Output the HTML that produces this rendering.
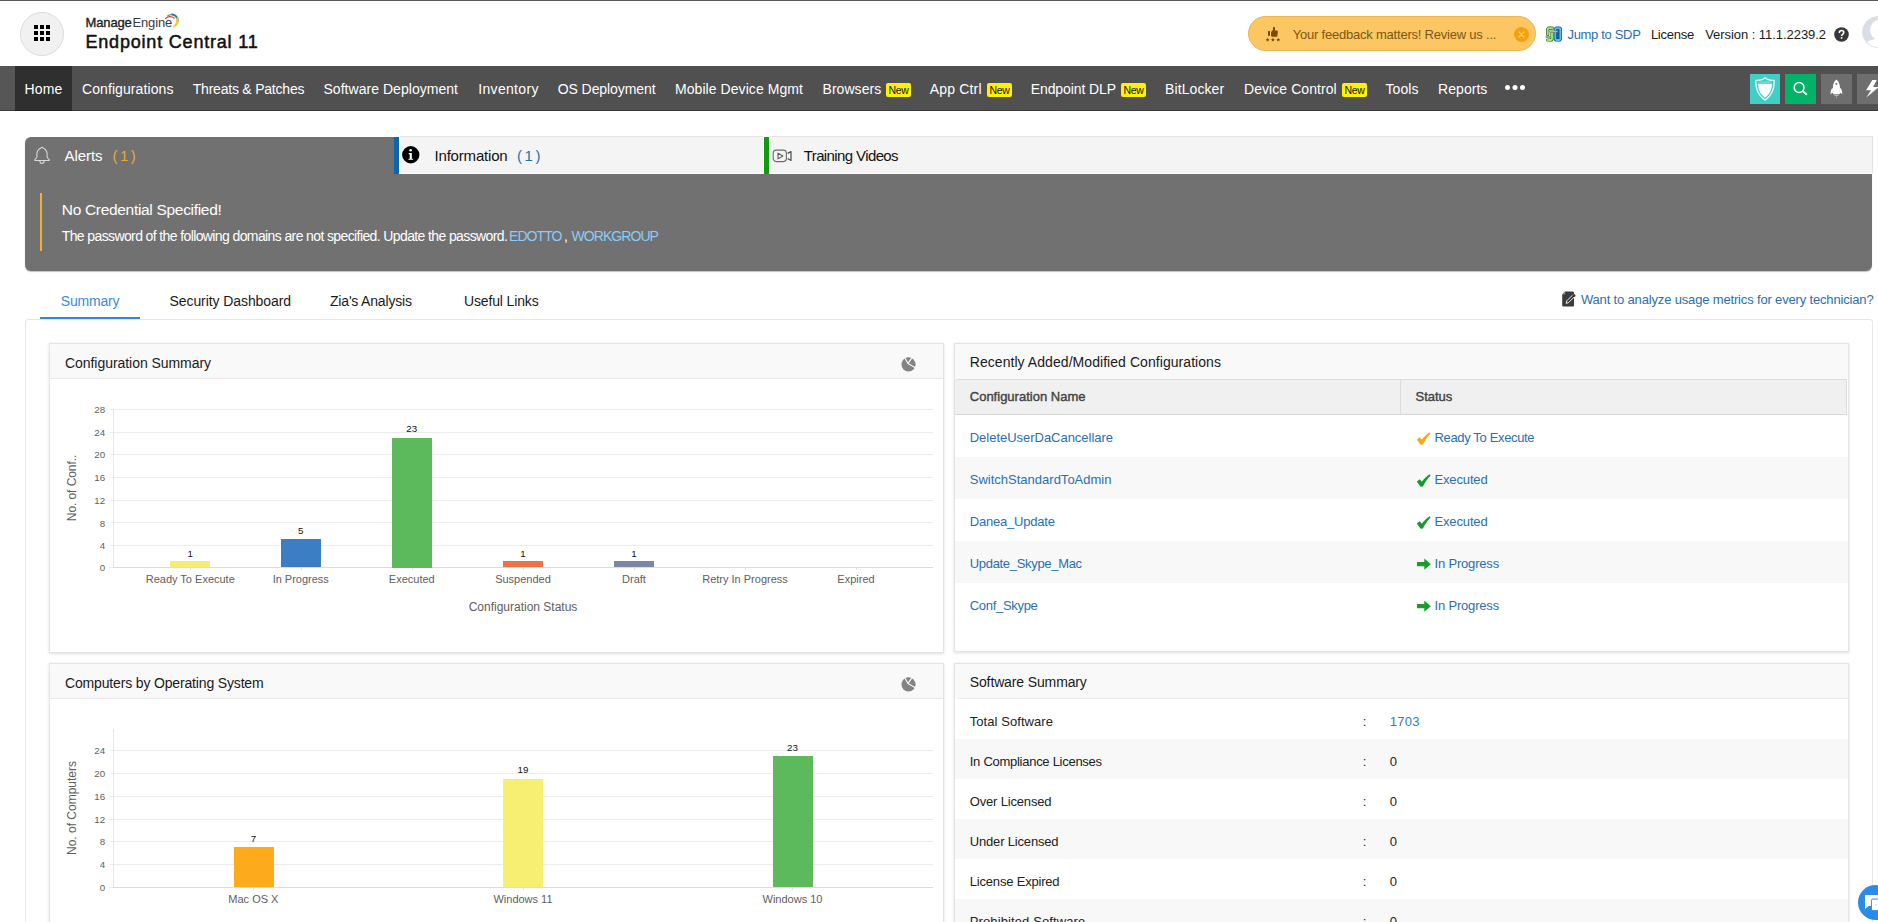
<!DOCTYPE html>
<html lang="en">
<head>
<meta charset="utf-8">
<title>Endpoint Central 11</title>
<style>
html,body{margin:0;padding:0;}
body{width:1878px;height:922px;overflow:hidden;background:#fff;position:relative;font-family:"Liberation Sans",sans-serif;}
.a{position:absolute;box-sizing:border-box;}
.t{position:absolute;white-space:nowrap;line-height:1;font-family:"Liberation Sans",sans-serif;}
svg{position:absolute;overflow:visible;}
.badge{position:absolute;top:83px;width:24.5px;height:14px;background:#fff200;border-radius:2px;}
.card{position:absolute;box-sizing:border-box;background:#fff;border:1px solid #e4e4e4;box-shadow:0 1px 3px rgba(0,0,0,0.13);}
.chd{position:absolute;left:0;top:0;right:0;height:35px;background:#f9f9f9;border-bottom:1px solid #e8e8e8;box-sizing:border-box;}
.gl{position:absolute;height:1px;background:#ececec;left:110px;width:823px;}
.bar{position:absolute;}
.row{position:absolute;left:955px;width:893px;}
</style>
</head>
<body>
<!-- top hairline -->
<div class="a" style="left:0;top:0;width:1878px;height:1px;background:#5a5a5a;"></div>

<!-- ===== header ===== -->
<div class="a" style="left:20px;top:12px;width:44px;height:44px;border-radius:50%;background:#f1f1f1;border:1px solid #dcdcdc;"></div>
<svg style="left:34px;top:25px;" width="16" height="16" viewBox="0 0 16 16"><g fill="#000">
<rect x="0" y="0" width="4" height="4"/><rect x="6" y="0" width="4" height="4"/><rect x="12" y="0" width="4" height="4"/>
<rect x="0" y="6" width="4" height="4"/><rect x="6" y="6" width="4" height="4"/><rect x="12" y="6" width="4" height="4"/>
<rect x="0" y="12" width="4" height="4"/><rect x="6" y="12" width="4" height="4"/><rect x="12" y="12" width="4" height="4"/></g></svg>
<!-- ManageEngine swoosh -->
<svg style="left:164px;top:13px;" width="16" height="15" viewBox="0 0 16 15" fill="none" stroke-linecap="round">
<path d="M1.4 5.6 C3.6 3.2 7.4 2.8 10.2 5.2" stroke="#d63a3f" stroke-width="1.1"/>
<path d="M3.6 3.0 C6.6 0.8 10.8 1.6 12.6 5.0" stroke="#3f9f4a" stroke-width="1.2"/>
<path d="M7.6 1.2 C11.2 1.2 13.8 3.8 14.0 7.4" stroke="#2c6db8" stroke-width="1.5"/>
<path d="M13.8 4.6 C15.0 8.4 13.4 12.0 9.6 13.6 C12.0 11.6 13.0 9.2 12.8 6.4" stroke="#f3c531" stroke-width="1.2" fill="#f3c531" stroke-linejoin="round"/>
</svg>

<!-- feedback pill -->
<div class="a" style="left:1248px;top:16px;width:288px;height:35px;border-radius:18px;background:#fcc762;border:1px solid #eab654;"></div>
<svg style="left:1265px;top:26px;" width="16" height="16" viewBox="0 0 16 16"><g fill="#7a4b02">
<rect x="3" y="5.1" width="2" height="4.7"/>
<path d="M6.1 5.7 C7.4 5.1 8 4 8 2.7 V1.7 C8 1.2 8.3 1 8.8 1 H9.3 C9.8 1 10 1.3 10 1.8 V4.4 H11.7 C12.5 4.4 13 5 12.9 5.9 L12.4 9.4 C12.3 10.2 11.7 10.7 10.9 10.7 H7.6 C7 10.7 6.5 10.5 6.1 10.2 Z"/>
<path d="M2.60 11.75 L3.16 13.03 L4.55 13.17 L3.50 14.09 L3.80 15.46 L2.60 14.75 L1.40 15.46 L1.70 14.09 L0.65 13.17 L2.04 13.03 Z"/><path d="M7.90 11.75 L8.46 13.03 L9.85 13.17 L8.80 14.09 L9.10 15.46 L7.90 14.75 L6.70 15.46 L7.00 14.09 L5.95 13.17 L7.34 13.03 Z"/><path d="M13.30 11.75 L13.86 13.03 L15.25 13.17 L14.20 14.09 L14.50 15.46 L13.30 14.75 L12.10 15.46 L12.40 14.09 L11.35 13.17 L12.74 13.03 Z"/></g></svg>
<svg style="left:1513.5px;top:26.5px;" width="15" height="15" viewBox="0 0 15 15"><circle cx="7.5" cy="7.5" r="7.4" fill="#f1a20c"/>
<path d="M4.9 4.9 L10.1 10.1 M10.1 4.9 L4.9 10.1" stroke="#ffd27c" stroke-width="1.3" stroke-linecap="round"/></svg>

<!-- SDP icon -->
<svg style="left:1546px;top:26px;" width="16" height="16" viewBox="0 0 16 16" fill="none" stroke-linecap="round" stroke-linejoin="round">
<path d="M6.3 2.2 H3 Q1.7 2.2 1.7 3.5 V8.6" stroke="#2c5f12" stroke-width="3.2"/>
<path d="M1.7 14 H4.7 Q6 14 6 12.7 V7" stroke="#2c5f12" stroke-width="3.2"/>
<rect x="9.3" y="2.2" width="5" height="11.8" rx="1.2" stroke="#15507f" stroke-width="3.2" fill="#1d5d92"/>
<path d="M6.3 2.2 H3 Q1.7 2.2 1.7 3.5 V8.6" stroke="#9af466" stroke-width="1.8"/>
<path d="M1.7 14 H4.7 Q6 14 6 12.7 V7" stroke="#9af466" stroke-width="1.8"/>
<rect x="9.3" y="2.2" width="5" height="11.8" rx="1.2" stroke="#4fbfff" stroke-width="1.8"/>
<rect x="4.2" y="4.7" width="7.6" height="1.5" fill="#c9d2d6" stroke="#51606a" stroke-width="0.5"/>
<rect x="0.3" y="10.2" width="3.4" height="1.5" fill="#b9c6bb" stroke="#44603a" stroke-width="0.5"/>
</svg>

<!-- help -->
<svg style="left:1834.3px;top:27px;" width="15" height="15" viewBox="0 0 15 15"><circle cx="7.5" cy="7.5" r="7.3" fill="#383838"/>
<path d="M5.3 5.9 C5.3 4.4 6.3 3.6 7.6 3.6 C8.9 3.6 9.8 4.4 9.8 5.5 C9.8 7.1 7.6 7.2 7.6 8.9" stroke="#fff" stroke-width="1.5" fill="none"/>
<rect x="6.8" y="10.1" width="1.6" height="1.6" fill="#fff"/></svg>
<!-- avatar -->
<div class="a" style="left:1862px;top:16px;width:32px;height:32px;border-radius:50%;background:#d9dee9;border:1px solid #e2e2e2;overflow:hidden;">
 <div class="a" style="left:6.8px;top:2.8px;width:19.4px;height:20.4px;border-radius:50%;background:#fff;"></div>
 <div class="a" style="left:-2px;top:21.6px;width:34px;height:24px;border-radius:50% 50% 0 0;background:#fff;"></div>
</div>

<!-- ===== nav bar ===== -->
<div class="a" style="left:0;top:66px;width:1878px;height:45px;background:#505050;"></div>
<div class="a" style="left:0;top:66px;width:15px;height:45px;background:#565656;"></div>
<div class="a" style="left:15px;top:66px;width:57px;height:45px;background:#2f2f2f;"></div>
<div class="a" style="left:0;top:110px;width:1878px;height:1px;background:rgba(0,0,0,0.28);"></div>
<div class="badge" style="left:886px;"></div><div class="badge" style="left:987px;"></div>
<div class="badge" style="left:1121px;"></div><div class="badge" style="left:1342px;"></div>
<svg style="left:1504.5px;top:85px;" width="20" height="5" viewBox="0 0 20 5"><g fill="#fff"><circle cx="2.5" cy="2.5" r="2.5"/><circle cx="10" cy="2.5" r="2.5"/><circle cx="17.5" cy="2.5" r="2.5"/></g></svg>
<!-- nav icons -->
<div class="a" style="left:1750px;top:74px;width:30px;height:30px;background:#40cfc7;"></div>
<svg style="left:1750px;top:74px;" width="30" height="30" viewBox="0 0 30 30" fill="none">
<path d="M15 3.8 C16.6 5.5 20.2 6.5 24.2 6.3 C24.5 14 22 21.6 15 26.1 C8 21.6 5.5 14 5.8 6.3 C9.8 6.5 13.4 5.5 15 3.8 Z" stroke="#fff" stroke-width="1.3" stroke-opacity="0.9" stroke-linejoin="round"/>
<path d="M8.1 9.7 H21.9 C21.8 15.5 19.8 20.3 15 23.4 C10.2 20.3 8.2 15.5 8.1 9.7 Z" fill="#fff"/>
<path d="M9.4 8.1 H20.6" stroke="#fff" stroke-width="0.7" stroke-opacity="0.55"/>
</svg>
<div class="a" style="left:1785px;top:74px;width:31px;height:30px;background:#02b267;"></div>
<svg style="left:1785px;top:74px;" width="31" height="30" viewBox="0 0 31 30" fill="none"><circle cx="14.1" cy="13.5" r="4.9" stroke="#fff" stroke-width="1.5"/><path d="M17.8 17.1 L21.3 20.2" stroke="#fff" stroke-width="1.9" stroke-linecap="round"/></svg>
<div class="a" style="left:1821px;top:74px;width:31px;height:30px;background:#6e6e6e;"></div>
<svg style="left:1821px;top:74px;" width="31" height="30" viewBox="0 0 31 30"><g fill="#fff">
<path d="M15.4 5.6 C18 7.6 18.9 10.6 18.9 13.6 V19 C18.9 19.8 18.4 20.3 17.6 20.3 H13.2 C12.4 20.3 11.9 19.8 11.9 19 V13.6 C11.9 10.6 12.8 7.6 15.4 5.6 Z"/>
<path d="M11.9 13.8 C10.2 15 9.4 17 9.6 20.4 C10.3 19.4 11.1 19 11.9 19 Z"/>
<path d="M18.9 13.8 C20.6 15 21.4 17 21.2 20.4 C20.5 19.4 19.7 19 18.9 19 Z"/>
<rect x="13.4" y="20.9" width="4" height="1.1" fill-opacity="0.5"/><rect x="14.9" y="22.3" width="1" height="1.9" fill-opacity="0.4"/></g>
<circle cx="15.4" cy="9.8" r="1.05" fill="#6e6e6e"/></svg>
<div class="a" style="left:1857px;top:74px;width:31px;height:30px;background:#6e6e6e;"></div>
<svg style="left:1857px;top:74px;" width="31" height="30" viewBox="0 0 31 30"><path d="M15.3 6.1 H19.8 L16.1 12.9 H22 L9.3 23.4 L14.1 16.2 H9.1 Z" fill="#fff"/></svg>

<!-- ===== alerts panel ===== -->
<div class="a" style="left:25px;top:137px;width:1847px;height:134px;border-radius:6px;background:#717171;box-shadow:0 1px 1px rgba(0,0,0,0.25);"></div>
<div class="a" style="left:399px;top:136px;width:365px;height:38px;background:#f4f4f4;border-top:1px solid #e4e4e4;border-left:1px solid #fff;border-right:1px solid #fff;border-bottom:1px solid #fff;"></div>
<div class="a" style="left:769px;top:136px;width:1104px;height:38px;background:#f4f4f4;border-top:1px solid #e4e4e4;border-left:1px solid #fff;border-right:1px solid #e4e4e4;border-bottom:1px solid #fff;"></div>
<div class="a" style="left:394px;top:137px;width:5px;height:37px;background:#0865b0;"></div>
<div class="a" style="left:764px;top:137px;width:5px;height:37px;background:#109a0e;"></div>
<div class="a" style="left:40px;top:193px;width:2px;height:58px;background:#efb22a;"></div>
<!-- bell -->
<svg style="left:34.2px;top:146px;" width="16" height="18" viewBox="0 0 16 18" fill="none" stroke="#dadada" stroke-width="1.05" stroke-linecap="round" stroke-linejoin="round">
<path d="M8 1.1 C6.6 2.7 2.9 3 2.9 8 V11 C2.9 12 1.7 12.7 0.9 13.5 C0.4 14.1 0.8 14.5 1.4 14.5 H14.6 C15.2 14.5 15.6 14.1 15.1 13.5 C14.3 12.7 13.1 12 13.1 11 V8 C13.1 3 9.4 2.7 8 1.1 Z"/>
<path d="M5.7 14.9 C5.9 16.5 6.8 17.4 8 17.4 C9.2 17.4 10.1 16.5 10.3 14.9"/></svg>
<!-- info -->
<svg style="left:402.2px;top:146.4px;" width="17.5" height="17.5" viewBox="0 0 18 18"><circle cx="9" cy="9" r="8.9" fill="#000"/>
<circle cx="8.9" cy="4.4" r="1.3" fill="#fff"/><path d="M6.9 7.2 H10.1 V13 H11.4 V14.2 H6.6 V13 H7.9 V8.4 H6.9 Z" fill="#fff"/></svg>
<!-- video -->
<svg style="left:771.5px;top:148.5px;" width="20" height="14" viewBox="0 0 20 14" fill="none" stroke-linejoin="round">
<rect x="1.2" y="1.1" width="13.2" height="11.5" rx="3" stroke="#6a6a6a" stroke-width="1.1"/><path d="M6 4.1 L10.9 7 L6 9.9 Z" stroke="#5a5a5a" stroke-width="1.1"/><path d="M15.6 4.4 L19 2.6 V11.4 L15.6 9.5" stroke="#4a4a4a" stroke-width="1.2"/></svg>

<!-- ===== main tabs ===== -->
<div class="a" style="left:40px;top:317px;width:100px;height:2px;background:#2b8be0;"></div>
<div class="a" style="left:25px;top:319px;width:1848px;height:640px;border:1px solid #e6e6e6;border-radius:3px;"></div>
<!-- edit/report icon -->
<svg style="left:1561.5px;top:291px;" width="14" height="16" viewBox="0 0 14 16"><path d="M3.2 0.4 H10.6 C11.4 0.4 12 1 12 1.8 V14.2 C12 15 11.4 15.6 10.6 15.6 H1.6 C0.8 15.6 0.2 15 0.2 14.2 V3.4 Z" fill="#3a3a3a"/>
<path d="M0.2 3.4 H3.2 V0.4 Z" fill="#8a8a8a"/>
<path d="M4.2 12.4 L4.8 9.8 L10.6 4 C11.1 3.5 11.9 3.5 12.4 4 C12.9 4.5 12.9 5.3 12.4 5.8 L6.6 11.6 Z" fill="#3a3a3a" stroke="#fff" stroke-width="0.9" stroke-linejoin="round"/>
<circle cx="12" cy="4.4" r="1.5" fill="#3a3a3a"/></svg>

<!-- ===== card 1 : Configuration Summary ===== -->
<div class="card" style="left:49px;top:343px;width:895px;height:310px;"><div class="chd"></div></div>
<!-- ===== card 2 : Recently Added ===== -->
<div class="card" style="left:954px;top:343px;width:895px;height:309px;"><div class="chd" style="border-bottom:none;"></div></div>
<!-- ===== card 3 : Computers by OS ===== -->
<div class="card" style="left:49px;top:663px;width:895px;height:300px;"><div class="chd"></div></div>
<!-- ===== card 4 : Software Summary ===== -->
<div class="card" style="left:954px;top:663px;width:895px;height:300px;"><div class="chd" style="border-bottom:none;"></div></div>
<div class="a" style="left:959px;top:698px;width:889px;height:1px;background:#e9e9e9;"></div>

<!-- pie icons -->
<svg style="left:900.5px;top:356.5px;" width="15" height="15" viewBox="0 0 15 15"><circle cx="7.5" cy="7.4" r="7.05" fill="#838383"/><path d="M7 6.6 L3.7 0.4 M7 6.6 L11.1 0.4 M7 6.6 L15.2 11.2" stroke="#f9f9f9" stroke-width="1.15" fill="none"/></svg>
<svg style="left:900.5px;top:676.5px;" width="15" height="15" viewBox="0 0 15 15"><circle cx="7.5" cy="7.4" r="7.05" fill="#838383"/><path d="M7 6.6 L3.7 0.4 M7 6.6 L11.1 0.4 M7 6.6 L15.2 11.2" stroke="#f9f9f9" stroke-width="1.15" fill="none"/></svg>

<!-- ===== chart 1 ===== -->
<div class="gl" style="top:409px;"></div><div class="gl" style="top:432px;"></div><div class="gl" style="top:454px;"></div>
<div class="gl" style="top:477px;"></div><div class="gl" style="top:500px;"></div><div class="gl" style="top:522px;"></div>
<div class="gl" style="top:545px;"></div>
<div class="a" style="left:110px;top:567px;width:3px;height:1px;background:#ececec;"></div><div class="a" style="left:113px;top:567px;width:820px;height:1px;background:#dcdcdc;"></div>
<div class="a" style="left:113px;top:409px;width:1px;height:159px;background:#e6e6e6;"></div>
<div class="bar" style="left:170px;top:561.3px;width:40px;height:6.2px;background:#f5ee70;"></div>
<div class="bar" style="left:280.75px;top:539.2px;width:40px;height:28.3px;background:#3b7ec3;"></div>
<div class="bar" style="left:391.75px;top:437.5px;width:40px;height:130px;background:#5cb95c;"></div>
<div class="bar" style="left:503px;top:561.3px;width:40px;height:6.2px;background:#ee7049;"></div>
<div class="bar" style="left:614px;top:561.3px;width:40px;height:6.2px;background:#7b86aa;"></div>
<!-- ticks -->
<div class="a" style="left:190px;top:568px;width:1px;height:2px;background:#e0e0e0;"></div><div class="a" style="left:301px;top:568px;width:1px;height:2px;background:#e0e0e0;"></div>
<div class="a" style="left:412px;top:568px;width:1px;height:2px;background:#e0e0e0;"></div><div class="a" style="left:523px;top:568px;width:1px;height:2px;background:#e0e0e0;"></div>
<div class="a" style="left:634px;top:568px;width:1px;height:2px;background:#e0e0e0;"></div><div class="a" style="left:745px;top:568px;width:1px;height:2px;background:#e0e0e0;"></div>
<div class="a" style="left:856px;top:568px;width:1px;height:2px;background:#e0e0e0;"></div>
<span class="t" style="left:71.5px;top:488.2px;font-size:12px;letter-spacing:-0.08px;color:#606060;transform:translate(-50%,-50%) rotate(-90deg);">No. of Conf..</span>

<!-- ===== chart 2 ===== -->
<div class="gl" style="top:750px;"></div><div class="gl" style="top:773px;"></div><div class="gl" style="top:796px;"></div>
<div class="gl" style="top:819px;"></div><div class="gl" style="top:841px;"></div><div class="gl" style="top:864px;"></div>
<div class="a" style="left:110px;top:886.5px;width:3px;height:1px;background:#ececec;"></div><div class="a" style="left:113px;top:886.5px;width:820px;height:1px;background:#dcdcdc;"></div>
<div class="a" style="left:113px;top:729px;width:1px;height:158px;background:#e6e6e6;"></div>
<div class="bar" style="left:233.5px;top:847px;width:40px;height:40px;background:#fdab1c;"></div>
<div class="bar" style="left:503px;top:778.5px;width:40px;height:108.5px;background:#f7ef72;"></div>
<div class="bar" style="left:772.5px;top:755.6px;width:40px;height:131.4px;background:#5cb95c;"></div>
<div class="a" style="left:253px;top:888px;width:1px;height:2px;background:#e0e0e0;"></div><div class="a" style="left:523px;top:888px;width:1px;height:2px;background:#e0e0e0;"></div><div class="a" style="left:792px;top:888px;width:1px;height:2px;background:#e0e0e0;"></div>
<span class="t" style="left:71.5px;top:808px;font-size:12px;color:#606060;transform:translate(-50%,-50%) rotate(-90deg);">No. of Computers</span>

<!-- ===== table ===== -->
<div class="a" style="left:955px;top:379px;width:892px;height:36px;background:#f0f0f0;border-top:1px solid #dcdcdc;border-top-left-radius:3px;border-bottom:1px solid #d6d6d6;border-right:1px solid #dcdcdc;"></div>
<div class="a" style="left:1400px;top:380px;width:1px;height:34px;background:#dcdcdc;"></div>
<div class="row" style="top:457px;height:42px;background:#f8f8f8;"></div>
<div class="row" style="top:541px;height:42px;background:#f8f8f8;"></div>
<!-- status icons -->
<svg style="left:1416.3px;top:432px;" width="15" height="13" viewBox="0 0 15 13"><path d="M0.8 7.4 L3.9 5.2 L5.8 7.8 C7.8 5 10.6 2.2 13.8 0.3 L14.6 1.4 C11.4 4.6 8.8 8.4 6.9 12.4 L4.6 12.7 Z" fill="#ffa412"/></svg>
<svg style="left:1416.3px;top:474px;" width="15" height="13" viewBox="0 0 15 13"><path d="M0.8 7.4 L3.9 5.2 L5.8 7.8 C7.8 5 10.6 2.2 13.8 0.3 L14.6 1.4 C11.4 4.6 8.8 8.4 6.9 12.4 L4.6 12.7 Z" fill="#109c2c"/></svg>
<svg style="left:1416.3px;top:516px;" width="15" height="13" viewBox="0 0 15 13"><path d="M0.8 7.4 L3.9 5.2 L5.8 7.8 C7.8 5 10.6 2.2 13.8 0.3 L14.6 1.4 C11.4 4.6 8.8 8.4 6.9 12.4 L4.6 12.7 Z" fill="#109c2c"/></svg>
<svg style="left:1417px;top:557.5px;" width="15" height="12" viewBox="0 0 15 12"><path d="M0 4 H7.3 V0.5 L13.8 6.15 L7.3 11.8 V8.3 H0 Z" fill="#12a02a"/></svg>
<svg style="left:1417px;top:599.5px;" width="15" height="12" viewBox="0 0 15 12"><path d="M0 4 H7.3 V0.5 L13.8 6.15 L7.3 11.8 V8.3 H0 Z" fill="#12a02a"/></svg>

<!-- software rows -->
<div class="row" style="top:739px;height:40px;background:#f8f8f8;"></div>
<div class="row" style="top:819px;height:40px;background:#f8f8f8;"></div>
<div class="row" style="top:899px;height:40px;background:#f8f8f8;"></div>

<!-- chat bubble -->
<div class="a" style="left:1858px;top:884.7px;width:35.3px;height:35.3px;border-radius:50%;background:#2a8cea;"></div>
<svg style="left:1864px;top:893px;" width="24" height="20" viewBox="0 0 24 20"><path d="M1.7 2 H16 V13 H4.6 L1 16.2 V2.7 Q1 2 1.7 2 Z" fill="#fff"/>
<rect x="7.4" y="6" width="13" height="11.7" rx="1.6" fill="#fff" stroke="#2a8cea" stroke-width="1"/><circle cx="11.9" cy="12" r="0.8" fill="#9ccaf6"/></svg>

<span class="t" style="top:16px;font-size:13px;color:#222;left:85.50px;letter-spacing:-0.131px;-webkit-text-stroke:0.35px #222;">Manage</span>
<span class="t" style="top:16px;font-size:13px;color:#3a3a3a;left:132.50px;letter-spacing:-0.147px;">Engine</span>
<span class="t" style="top:33px;font-size:18px;color:#111;left:85.50px;letter-spacing:0.801px;-webkit-text-stroke:0.5px #111;">Endpoint Central 11</span>
<span class="t" style="top:28px;font-size:13px;color:#7a5716;left:1292.80px;letter-spacing:-0.218px;">Your feedback matters! Review us ...</span>
<span class="t" style="top:28px;font-size:13px;color:#2a6fb0;left:1567.50px;letter-spacing:-0.327px;">Jump to SDP</span>
<span class="t" style="top:28px;font-size:13px;color:#1a1a1a;left:1650.90px;letter-spacing:-0.259px;">License</span>
<span class="t" style="top:28px;font-size:13px;color:#1a1a1a;left:1705.20px;letter-spacing:-0.053px;">Version : 11.1.2239.2</span>
<span class="t" style="top:82px;font-size:14px;color:#fff;left:24.50px;letter-spacing:0.160px;">Home</span>
<span class="t" style="top:82px;font-size:14px;color:#fff;left:82.00px;letter-spacing:0.087px;">Configurations</span>
<span class="t" style="top:82px;font-size:14px;color:#fff;left:192.75px;letter-spacing:-0.216px;">Threats &amp; Patches</span>
<span class="t" style="top:82px;font-size:14px;color:#fff;left:323.50px;letter-spacing:0.035px;">Software Deployment</span>
<span class="t" style="top:82px;font-size:14px;color:#fff;left:478.25px;letter-spacing:0.323px;">Inventory</span>
<span class="t" style="top:82px;font-size:14px;color:#fff;left:557.75px;letter-spacing:-0.083px;">OS Deployment</span>
<span class="t" style="top:82px;font-size:14px;color:#fff;left:675.00px;letter-spacing:0.065px;">Mobile Device Mgmt</span>
<span class="t" style="top:82px;font-size:14px;color:#fff;left:822.50px;letter-spacing:0.049px;">Browsers</span>
<span class="t" style="top:82px;font-size:14px;color:#fff;left:929.75px;letter-spacing:0.178px;">App Ctrl</span>
<span class="t" style="top:82px;font-size:14px;color:#fff;left:1030.75px;letter-spacing:-0.096px;">Endpoint DLP</span>
<span class="t" style="top:82px;font-size:14px;color:#fff;left:1165.00px;letter-spacing:0.099px;">BitLocker</span>
<span class="t" style="top:82px;font-size:14px;color:#fff;left:1244.00px;letter-spacing:0.069px;">Device Control</span>
<span class="t" style="top:82px;font-size:14px;color:#fff;left:1385.50px;letter-spacing:0.062px;">Tools</span>
<span class="t" style="top:82px;font-size:14px;color:#fff;left:1438.10px;letter-spacing:0.038px;">Reports</span>
<span class="t" style="top:85px;font-size:10.5px;color:#111;left:888.40px;letter-spacing:-0.272px;">New</span>
<span class="t" style="top:85px;font-size:10.5px;color:#111;left:989.40px;letter-spacing:-0.272px;">New</span>
<span class="t" style="top:85px;font-size:10.5px;color:#111;left:1123.40px;letter-spacing:-0.272px;">New</span>
<span class="t" style="top:85px;font-size:10.5px;color:#111;left:1344.40px;letter-spacing:-0.272px;">New</span>
<span class="t" style="top:148px;font-size:15px;color:#fff;left:64.50px;letter-spacing:-0.057px;">Alerts</span>
<span class="t" style="top:148px;font-size:15px;color:#eaa93c;left:112.50px;letter-spacing:-0.884px;">( 1 )</span>
<span class="t" style="top:148px;font-size:15px;color:#111;left:434.50px;letter-spacing:-0.186px;">Information</span>
<span class="t" style="top:148px;font-size:15px;color:#2a6fa8;left:517.00px;letter-spacing:-0.784px;">( 1 )</span>
<span class="t" style="top:148px;font-size:15px;color:#111;left:803.75px;letter-spacing:-0.610px;">Training Videos</span>
<span class="t" style="top:202px;font-size:15.5px;color:#fff;left:61.75px;letter-spacing:-0.309px;">No Credential Specified!</span>
<span class="t" style="top:229px;font-size:14px;color:#fff;left:61.75px;letter-spacing:-0.612px;">The password of the following domains are not specified. Update the password.</span>
<span class="t" style="top:229px;font-size:14px;color:#8fcbf3;left:509.00px;letter-spacing:-0.930px;">EDOTTO</span>
<span class="t" style="top:229px;font-size:14px;color:#fff;left:564.00px;letter-spacing:-0.391px;">,</span>
<span class="t" style="top:229px;font-size:14px;color:#8fcbf3;left:571.50px;letter-spacing:-0.932px;">WORKGROUP</span>
<span class="t" style="top:294px;font-size:14px;color:#3a8bd6;left:60.75px;letter-spacing:-0.201px;">Summary</span>
<span class="t" style="top:294px;font-size:14px;color:#1a1a1a;left:169.50px;letter-spacing:-0.081px;">Security Dashboard</span>
<span class="t" style="top:294px;font-size:14px;color:#1a1a1a;left:330.00px;letter-spacing:-0.188px;">Zia's Analysis</span>
<span class="t" style="top:294px;font-size:14px;color:#1a1a1a;left:464.00px;letter-spacing:-0.147px;">Useful Links</span>
<span class="t" style="top:293px;font-size:13px;color:#2a6fb0;left:1580.90px;letter-spacing:-0.161px;">Want to analyze usage metrics for every technician?</span>
<span class="t" style="top:356px;font-size:14px;color:#1a1a1a;left:65.00px;letter-spacing:-0.051px;">Configuration Summary</span>
<span class="t" style="top:355px;font-size:14px;color:#1a1a1a;left:969.75px;letter-spacing:0.058px;">Recently Added/Modified Configurations</span>
<span class="t" style="top:676px;font-size:14px;color:#1a1a1a;left:65.00px;letter-spacing:-0.158px;">Computers by Operating System</span>
<span class="t" style="top:675px;font-size:14px;color:#1a1a1a;left:969.75px;letter-spacing:-0.128px;">Software Summary</span>
<span class="t" style="top:390px;font-size:13px;color:#444;left:969.75px;letter-spacing:0.007px;-webkit-text-stroke:0.4px #444;">Configuration Name</span>
<span class="t" style="top:390px;font-size:13px;color:#444;left:1415.50px;letter-spacing:-0.010px;-webkit-text-stroke:0.4px #444;">Status</span>
<span class="t" style="top:431px;font-size:13px;color:#2a6fb0;left:969.75px;letter-spacing:-0.025px;">DeleteUserDaCancellare</span>
<span class="t" style="top:431px;font-size:13px;color:#2a6fb0;left:1434.50px;letter-spacing:-0.349px;">Ready To Execute</span>
<span class="t" style="top:473px;font-size:13px;color:#2a6fb0;left:969.75px;letter-spacing:0.005px;">SwitchStandardToAdmin</span>
<span class="t" style="top:473px;font-size:13px;color:#2a6fb0;left:1434.50px;letter-spacing:-0.150px;">Executed</span>
<span class="t" style="top:515px;font-size:13px;color:#2a6fb0;left:969.75px;letter-spacing:-0.206px;">Danea_Update</span>
<span class="t" style="top:515px;font-size:13px;color:#2a6fb0;left:1434.50px;letter-spacing:-0.150px;">Executed</span>
<span class="t" style="top:557px;font-size:13px;color:#2a6fb0;left:969.75px;letter-spacing:-0.317px;">Update_Skype_Mac</span>
<span class="t" style="top:557px;font-size:13px;color:#2a6fb0;left:1434.50px;letter-spacing:-0.180px;">In Progress</span>
<span class="t" style="top:599px;font-size:13px;color:#2a6fb0;left:969.75px;letter-spacing:-0.308px;">Conf_Skype</span>
<span class="t" style="top:599px;font-size:13px;color:#2a6fb0;left:1434.50px;letter-spacing:-0.180px;">In Progress</span>
<span class="t" style="top:715px;font-size:13px;color:#222;left:969.75px;letter-spacing:0.062px;">Total Software</span>
<span class="t" style="top:715px;font-size:13px;color:#222;left:1362.80px;letter-spacing:-0.125px;">:</span>
<span class="t" style="top:715px;font-size:13px;color:#2a7fc2;left:1389.70px;letter-spacing:0.320px;">1703</span>
<span class="t" style="top:755px;font-size:13px;color:#222;left:969.75px;letter-spacing:-0.272px;">In Compliance Licenses</span>
<span class="t" style="top:755px;font-size:13px;color:#222;left:1362.80px;letter-spacing:-0.125px;">:</span>
<span class="t" style="top:755px;font-size:13px;color:#222;left:1389.70px;letter-spacing:0.866px;">0</span>
<span class="t" style="top:795px;font-size:13px;color:#222;left:969.75px;letter-spacing:-0.168px;">Over Licensed</span>
<span class="t" style="top:795px;font-size:13px;color:#222;left:1362.80px;letter-spacing:-0.125px;">:</span>
<span class="t" style="top:795px;font-size:13px;color:#222;left:1389.70px;letter-spacing:0.866px;">0</span>
<span class="t" style="top:835px;font-size:13px;color:#222;left:969.75px;letter-spacing:-0.172px;">Under Licensed</span>
<span class="t" style="top:835px;font-size:13px;color:#222;left:1362.80px;letter-spacing:-0.125px;">:</span>
<span class="t" style="top:835px;font-size:13px;color:#222;left:1389.70px;letter-spacing:0.866px;">0</span>
<span class="t" style="top:875px;font-size:13px;color:#222;left:969.75px;letter-spacing:-0.190px;">License Expired</span>
<span class="t" style="top:875px;font-size:13px;color:#222;left:1362.80px;letter-spacing:-0.125px;">:</span>
<span class="t" style="top:875px;font-size:13px;color:#222;left:1389.70px;letter-spacing:0.866px;">0</span>
<span class="t" style="top:915px;font-size:13px;color:#222;left:969.75px;letter-spacing:0.116px;">Prohibited Software</span>
<span class="t" style="top:915px;font-size:13px;color:#222;left:1362.80px;letter-spacing:-0.125px;">:</span>
<span class="t" style="top:915px;font-size:13px;color:#222;left:1389.70px;letter-spacing:0.866px;">0</span>
<span class="t" style="top:563px;font-size:9.75px;color:#606060;right:1772.90px;">0</span>
<span class="t" style="top:541px;font-size:9.75px;color:#606060;right:1772.90px;">4</span>
<span class="t" style="top:519px;font-size:9.75px;color:#606060;right:1772.90px;">8</span>
<span class="t" style="top:496px;font-size:9.75px;color:#606060;right:1772.90px;">12</span>
<span class="t" style="top:473px;font-size:9.75px;color:#606060;right:1772.90px;">16</span>
<span class="t" style="top:450px;font-size:9.75px;color:#606060;right:1772.90px;">20</span>
<span class="t" style="top:428px;font-size:9.75px;color:#606060;right:1772.90px;">24</span>
<span class="t" style="top:405px;font-size:9.75px;color:#606060;right:1772.90px;">28</span>
<span class="t" style="top:883px;font-size:9.75px;color:#606060;right:1772.90px;">0</span>
<span class="t" style="top:860px;font-size:9.75px;color:#606060;right:1772.90px;">4</span>
<span class="t" style="top:837px;font-size:9.75px;color:#606060;right:1772.90px;">8</span>
<span class="t" style="top:815px;font-size:9.75px;color:#606060;right:1772.90px;">12</span>
<span class="t" style="top:792px;font-size:9.75px;color:#606060;right:1772.90px;">16</span>
<span class="t" style="top:769px;font-size:9.75px;color:#606060;right:1772.90px;">20</span>
<span class="t" style="top:746px;font-size:9.75px;color:#606060;right:1772.90px;">24</span>
<span class="t" style="top:574px;font-size:11px;color:#606060;left:190.25px;transform:translateX(-50%);">Ready To Execute</span>
<span class="t" style="top:574px;font-size:11px;color:#606060;left:300.75px;transform:translateX(-50%);">In Progress</span>
<span class="t" style="top:574px;font-size:11px;color:#606060;left:411.75px;transform:translateX(-50%);">Executed</span>
<span class="t" style="top:574px;font-size:11px;color:#606060;left:523.00px;transform:translateX(-50%);">Suspended</span>
<span class="t" style="top:574px;font-size:11px;color:#606060;left:634.00px;transform:translateX(-50%);">Draft</span>
<span class="t" style="top:574px;font-size:11px;color:#606060;left:745.00px;transform:translateX(-50%);">Retry In Progress</span>
<span class="t" style="top:574px;font-size:11px;color:#606060;left:856.00px;transform:translateX(-50%);">Expired</span>
<span class="t" style="top:601px;font-size:12px;color:#606060;left:523.00px;transform:translateX(-50%);">Configuration Status</span>
<span class="t" style="top:549px;font-size:9.75px;color:#111;left:190.25px;transform:translateX(-50%);">1</span>
<span class="t" style="top:526px;font-size:9.75px;color:#111;left:300.75px;transform:translateX(-50%);">5</span>
<span class="t" style="top:424px;font-size:9.75px;color:#111;left:411.75px;transform:translateX(-50%);">23</span>
<span class="t" style="top:549px;font-size:9.75px;color:#111;left:523.00px;transform:translateX(-50%);">1</span>
<span class="t" style="top:549px;font-size:9.75px;color:#111;left:634.00px;transform:translateX(-50%);">1</span>
<span class="t" style="top:894px;font-size:11px;color:#606060;left:253.40px;transform:translateX(-50%);">Mac OS X</span>
<span class="t" style="top:894px;font-size:11px;color:#606060;left:523.00px;transform:translateX(-50%);">Windows 11</span>
<span class="t" style="top:894px;font-size:11px;color:#606060;left:792.50px;transform:translateX(-50%);">Windows 10</span>
<span class="t" style="top:834px;font-size:9.75px;color:#111;left:253.40px;transform:translateX(-50%);">7</span>
<span class="t" style="top:765px;font-size:9.75px;color:#111;left:523.00px;transform:translateX(-50%);">19</span>
<span class="t" style="top:743px;font-size:9.75px;color:#111;left:792.50px;transform:translateX(-50%);">23</span>
</body>
</html>
